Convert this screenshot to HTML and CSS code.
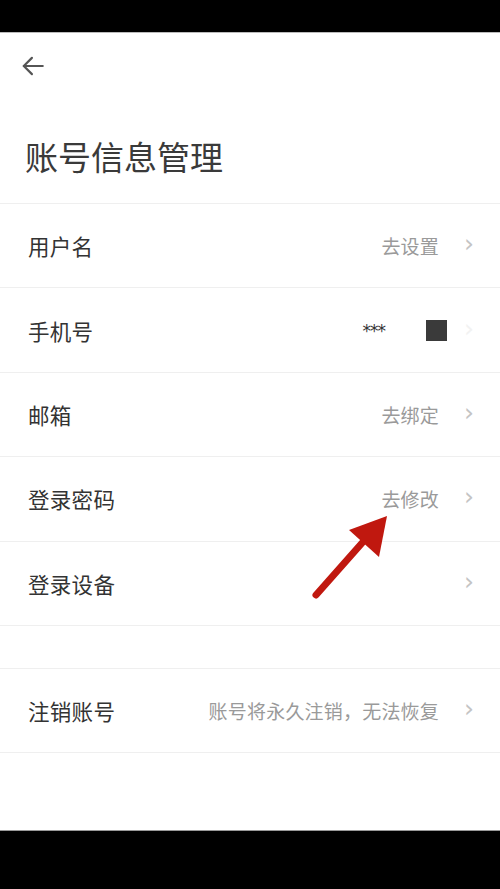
FILE: index.html
```html
<!DOCTYPE html>
<html lang="zh-CN">
<head>
<meta charset="utf-8">
<title>账号信息管理</title>
<link rel="stylesheet" href="styles.css">
</head>
<body>
<div class="screen">
  <div class="statusbar"></div>
  <div class="page">
    <div class="nav">
      <svg class="back" width="26" height="26" viewBox="0 0 24 24" fill="none" stroke="#555" stroke-width="2" stroke-linecap="round" stroke-linejoin="round"><path d="M21 12H3.5"/><path d="M11 4.5L3.5 12l7.5 7.5"/></svg>
    </div>
    <h1 class="title">账号信息管理</h1>
    <div class="list">
      <div class="row"><span class="label">用户名</span><span class="value">去设置</span><span class="chev">›</span></div>
      <div class="row"><span class="label">手机号</span><span class="phone"><span class="stars">***</span><span class="block"></span></span><span class="chev faint">›</span></div>
      <div class="row"><span class="label">邮箱</span><span class="value">去绑定</span><span class="chev">›</span></div>
      <div class="row"><span class="label">登录密码</span><span class="value">去修改</span><span class="chev">›</span></div>
      <div class="row"><span class="label">登录设备</span><span class="value"></span><span class="chev">›</span></div>
      <div class="spacer"></div>
      <div class="row"><span class="label">注销账号</span><span class="value">账号将永久注销，无法恢复</span><span class="chev">›</span></div>
    </div>
  </div>
  <div class="navbar"></div>
  <svg class="annot" width="500" height="889" viewBox="0 0 500 889">
    <line x1="316" y1="595" x2="370" y2="534" stroke="#c0180f" stroke-width="7" stroke-linecap="round"/>
    <polygon points="387,516 349,530 379,557" fill="#c0180f"/>
  </svg>
</div>
</body>
</html>
```

FILE: styles.css
```css
* { box-sizing: border-box; }
html, body { margin: 0; padding: 0; background: #000; }
body {
  font-family: "Noto Sans CJK SC", "Noto Sans", sans-serif;
  color: #333;
}
.screen {
  position: relative;
  width: 500px;
  height: 889px;
  display: flex;
  flex-direction: column;
  overflow: hidden;
}
.statusbar { height: 33px; background: #000; border-bottom: 1px solid #bbb; }
.page {
  height: 797px;
  background: #fff;
  display: flex;
  flex-direction: column;
}
.nav {
  height: 69px;
  padding: 20px 0 0 20px;
}
.back { display: block; }
.title {
  margin: 0;
  height: 101px;
  padding: 32px 0 0 25px;
  font-size: 33px;
  font-weight: 400;
  line-height: 44px;
  color: #3a3a3a;
  letter-spacing: 0;
}
.list { border-top: 1px solid #efefef; }
.row {
  height: 84.4px;
  border-bottom: 1px solid #efefef;
  display: flex;
  align-items: center;
  padding: 0 26px 0 28px;
}
.label {
  font-size: 21.5px;
  color: #333;
  flex: 1;
  letter-spacing: 0.3px;
}
.value {
  font-size: 19px;
  color: #9a9a9a;
  margin-right: 25px;
  letter-spacing: 0.2px;
}
.chev {
  font-family: "DejaVu Sans", sans-serif;
  font-size: 25px;
  color: #c4c4c4;
  line-height: 1;
  width: 10px;
  padding-bottom: 4px;
}
.chev.faint { color: #f2f2f2; }
.phone {
  display: flex;
  align-items: center;
  margin-right: 17px;
}
.stars {
  font-family: "DejaVu Sans", sans-serif;
  font-size: 17px;
  color: #333;
  margin-right: 41px;
  margin-top: 2px;
  letter-spacing: -1px;
}
.block {
  width: 21px;
  height: 21px;
  background: #3a3a3a;
}
.spacer {
  height: 43px;
  border-bottom: 1px solid #efefef;
}
.navbar { flex: 1; background: #000; border-top: 1px solid #999; }
.annot {
  position: absolute;
  left: 0;
  top: 0;
  pointer-events: none;
}
```
